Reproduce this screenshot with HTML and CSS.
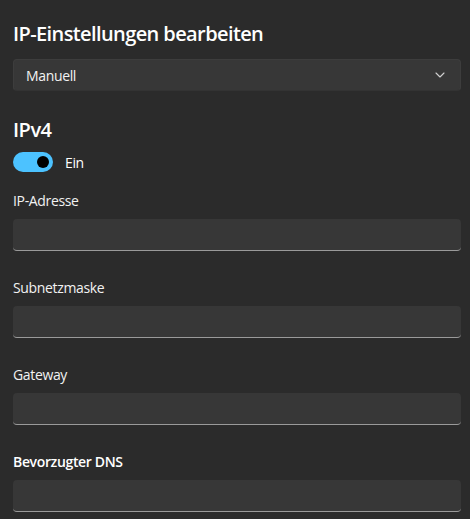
FILE: index.html
```html
<!DOCTYPE html>
<html>
<head>
  <title>IP-Einstellungen bearbeiten</title>
  <link rel="stylesheet" href="styles.css">
</head>
<body>
  <div class="dialog">
    <h1 class="dialog-title">IP-Einstellungen bearbeiten</h1>

    <div class="combo">
      <span class="combo-value">Manuell</span>
      <svg class="combo-chevron" width="10" height="6" viewBox="0 0 10 6">
        <path d="M1 1 L5 5 L9 1" fill="none" stroke="#d0d0d0" stroke-width="1.1" stroke-linecap="round" stroke-linejoin="round"/>
      </svg>
    </div>

    <h2 class="section-title">IPv4</h2>
    <div class="toggle-row">
      <div class="toggle on"><div class="toggle-knob"></div></div>
      <span class="toggle-label">Ein</span>
    </div>

    <div class="fields">
      <div class="field">
        <label class="field-label">IP-Adresse</label>
        <div class="field-input"></div>
      </div>
      <div class="field">
        <label class="field-label">Subnetzmaske</label>
        <div class="field-input"></div>
      </div>
      <div class="field">
        <label class="field-label">Gateway</label>
        <div class="field-input"></div>
      </div>
      <div class="field">
        <label class="field-label strong">Bevorzugter DNS</label>
        <div class="field-input"></div>
      </div>
    </div>
  </div>
</body>
</html>
```

FILE: styles.css
```css
html, body {
  margin: 0;
  height: 100%;
  background-color: #2b2b2b;
  overflow: hidden;
}

.dialog {
  padding: 20px 9px 0 13px;
  font-family: "Open Sans", "Noto Sans", sans-serif;
  color: #ffffff;
  letter-spacing: -0.35px;
}

.dialog-title {
  margin: 0;
  font-size: 20px;
  line-height: 28px;
  font-weight: 600;
  letter-spacing: -0.6px;
}

.combo {
  height: 30px;
  margin-top: 11px;
  padding: 0 15px 0 12px;
  display: flex;
  align-items: center;
  justify-content: space-between;
  background-color: #373737;
  border: 1px solid #3d3d3d;
  border-bottom-color: #333333;
  border-radius: 4px;
}

.combo-value {
  font-size: 14px;
  color: #f2f2f2;
}

.section-title {
  margin: 25px 0 0 0;
  font-size: 20px;
  line-height: 28px;
  font-weight: 600;
  letter-spacing: -0.5px;
}

.toggle-row {
  margin-top: 8px;
  display: flex;
  align-items: center;
  gap: 12px;
}

.toggle {
  width: 40px;
  height: 20px;
  border-radius: 10px;
  background-color: #4cc2ff;
  display: flex;
  align-items: center;
  justify-content: flex-end;
  padding: 0 4px;
  box-sizing: border-box;
}

.toggle-knob {
  width: 12px;
  height: 12px;
  border-radius: 50%;
  background-color: #000000;
}

.toggle-label {
  font-size: 14px;
}

.fields {
  margin-top: 19px;
  display: flex;
  flex-direction: column;
  gap: 27px;
}

.field-label {
  display: block;
  font-size: 14px;
  line-height: 20px;
  color: #f2f2f2;
}

.field-label.strong {
  font-weight: 600;
  color: #ffffff;
}

.field-input {
  height: 31px;
  margin-top: 8px;
  background-color: #373737;
  border-radius: 4px;
  border-bottom: 1px solid #9a9a9a;
}
```
